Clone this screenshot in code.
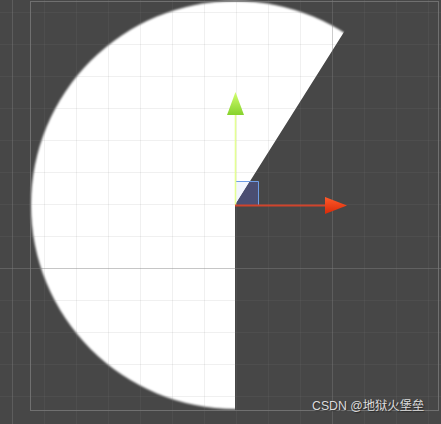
import React from 'react';

const CX = 235;
const CY = 205;
const R = 204;

// grid lines every 32px, major every 320px
const xs = [12, 44, 76, 108, 140, 172, 204, 236, 268, 300, 332, 364, 396, 428];
const ys = [12, 44, 76, 108, 140, 172, 204, 236, 268, 300, 332, 364, 396];
const majorX = [12, 332];
const majorY = [268];

function Scene() {
  return (
    <svg width="441" height="424" viewBox="0 0 441 424" className="block">
      <defs>
        <filter id="soft" x="-10%" y="-10%" width="120%" height="120%">
          <feGaussianBlur stdDeviation="1.3" />
        </filter>
        <clipPath id="wedge">
          <polygon points={`${CX},${CY} ${CX + 109 * 4},${CY - 173 * 4} -300,-400 -300,800 ${CX},800`} />
        </clipPath>
        <linearGradient id="greenHead" x1="0" y1="0" x2="0" y2="1">
          <stop offset="0" stopColor="#d4ff70" />
          <stop offset="1" stopColor="#86d22c" />
        </linearGradient>
        <linearGradient id="redHead" x1="0" y1="0" x2="0" y2="1">
          <stop offset="0" stopColor="#ff5a2a" />
          <stop offset="1" stopColor="#d82a08" />
        </linearGradient>
      </defs>

      {/* sector */}
      <g clipPath="url(#wedge)">
        <circle cx={CX} cy={CY} r={R} fill="#ffffff" filter="url(#soft)" />
      </g>

      {/* grid */}
      {xs.map((x) => (
        <line
          key={`x${x}`}
          x1={x + 0.5}
          y1="0"
          x2={x + 0.5}
          y2="424"
          stroke="#808080"
          strokeOpacity={majorX.includes(x) ? 0.4 : 0.12}
        />
      ))}
      {ys.map((y) => (
        <line
          key={`y${y}`}
          x1="0"
          y1={y + 0.5}
          x2="441"
          y2={y + 0.5}
          stroke="#808080"
          strokeOpacity={majorY.includes(y) ? 0.45 : 0.12}
        />
      ))}

      {/* frame */}
      <rect x="30.5" y="1.5" width="408" height="409" fill="none" stroke="#7a7a7a" strokeOpacity="0.8" />

      {/* rect gizmo */}
      <polygon points="235,205 235,181 250,181" fill="#f2f6ff" />
      <polygon points="235,205 250,181 259,181 259,205" fill="#4a4e72" />
      <polyline points="235,181.5 258.5,181.5 258.5,205" fill="none" stroke="#6e9de6" />

      {/* y axis */}
      <line x1="235.5" y1="205" x2="235.5" y2="114" stroke="#e4ff94" strokeWidth="1.6" />
      <polygon points="235.5,92 227,115 244,115" fill="url(#greenHead)" />

      {/* x axis */}
      <line x1="235" y1="205.5" x2="326" y2="205.5" stroke="#d0442c" strokeWidth="2" />
      <polygon points="347,205.5 325,197 325,214" fill="url(#redHead)" />
    </svg>
  );
}

export default function App() {
  return (
    <div className="relative w-[441px] h-[424px] bg-[#474747] overflow-hidden">
      <Scene />
      <div
        className="absolute left-[312px] top-[400px] text-[12.3px] leading-none text-[#dcdcdc] whitespace-nowrap [text-shadow:1px_1px_1px_rgba(0,0,0,0.5)]"
        style={{ fontFamily: '"Liberation Sans", "Noto Sans CJK SC", sans-serif' }}
      >
        CSDN @地狱火堡垒
      </div>
    </div>
  );
}
